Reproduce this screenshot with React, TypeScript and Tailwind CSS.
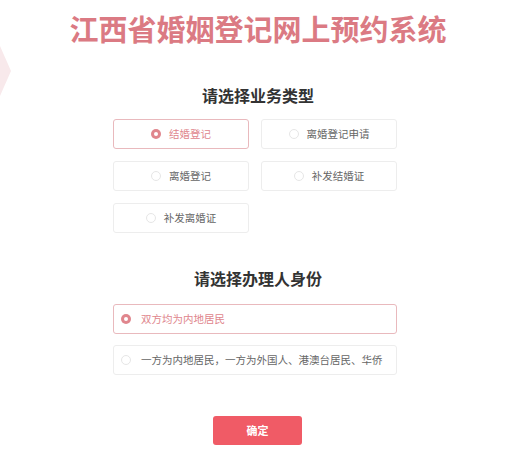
const font = { fontFamily: '"Noto Sans CJK SC", "Noto Sans", sans-serif' }

const businessTypes = ["结婚登记", "离婚登记申请", "离婚登记", "补发结婚证", "补发离婚证"]
const identities = [
  "双方均为内地居民",
  "一方为内地居民，一方为外国人、港澳台居民、华侨",
]

function Radio({ checked }: { checked: boolean }) {
  return checked ? (
    <span className="flex h-[10px] w-[10px] shrink-0 items-center justify-center rounded-full bg-[#e0868d]">
      <span className="h-[4px] w-[4px] rounded-full bg-white" />
    </span>
  ) : (
    <span className="h-[10px] w-[10px] shrink-0 rounded-full border border-[#e6e6e6] bg-white" />
  )
}

export default function App() {
  const selectedType = 0
  const selectedIdentity = 0

  return (
    <div
      className="relative h-[453px] w-[516px] overflow-hidden bg-white"
      style={font}
    >
      {/* faint decoration on the left edge */}
      <div className="absolute left-0 top-[46px] h-[50px] w-[11px] bg-[#f8e9eb] [clip-path:polygon(0_0,100%_50%,0_100%)]" />

      <h1 className="mt-[12px] text-center text-[29px] font-bold leading-[32px] text-[#db7a83]">
        江西省婚姻登记网上预约系统
      </h1>

      <h2 className="mt-[41px] text-center text-[16px] font-bold leading-[20px] text-[#333]">
        请选择业务类型
      </h2>

      <div className="ml-[113px] mt-[14px] grid w-[284px] grid-cols-2 gap-x-[12px] gap-y-[12px]">
        {businessTypes.map((t, i) => {
          const on = i === selectedType
          return (
            <div
              key={t}
              className={`flex h-[30px] items-center justify-center gap-[8px] rounded-[3px] border ${
                on ? "border-[#e9b9bd]" : "border-[#ededed]"
              }`}
            >
              <Radio checked={on} />
              <span
                className={`text-[10.5px] leading-none ${
                  on ? "text-[#e0868d]" : "text-[#666]"
                }`}
              >
                {t}
              </span>
            </div>
          )
        })}
      </div>

      <h2 className="mt-[35px] text-center text-[16px] font-bold leading-[20px] text-[#333]">
        请选择办理人身份
      </h2>

      <div className="ml-[113px] mt-[16px] flex w-[284px] flex-col gap-[11px]">
        {identities.map((t, i) => {
          const on = i === selectedIdentity
          return (
            <div
              key={t}
              className={`flex h-[30px] items-center gap-[10px] rounded-[3px] border pl-[7px] ${
                on ? "border-[#e9b9bd]" : "border-[#ededed]"
              }`}
            >
              <Radio checked={on} />
              <span
                className={`text-[10.5px] leading-none ${
                  on ? "text-[#e0868d]" : "text-[#666]"
                }`}
              >
                {t}
              </span>
            </div>
          )
        })}
      </div>

      <div className="ml-[213px] mt-[41px]">
        <button className="h-[29px] w-[89px] rounded-[3px] bg-[#f05b66] text-[11px] font-bold text-white">
          确定
        </button>
      </div>
    </div>
  )
}
